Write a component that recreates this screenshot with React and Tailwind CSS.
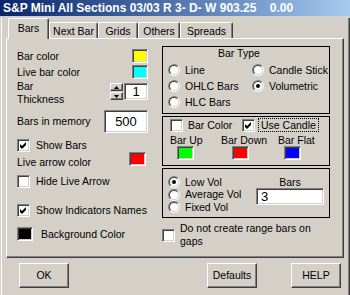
import React from 'react';

const sunken = 'border border-t-[#808080] border-l-[#808080] border-r-white border-b-white shadow-[inset_1px_1px_#404040,inset_-1px_-1px_#d4d0c8]';
const raised = 'border border-t-white border-l-white border-r-[#404040] border-b-[#404040] shadow-[inset_-1px_-1px_#808080]';

const Radio = ({ on }) => (
    <span className="w-[12px] h-[12px] shrink-0 rounded-full border border-t-[#808080] border-l-[#808080] border-r-white border-b-white flex">
        <span className="flex-1 rounded-full border border-t-[#404040] border-l-[#404040] border-r-[#d4d0c8] border-b-[#d4d0c8] bg-white flex items-center justify-center">
            {on && <span className="w-[4px] h-[4px] rounded-full bg-black" />}
        </span>
    </span>
);

const Check = ({ on }) => (
    <span className={`w-[13px] h-[13px] shrink-0 bg-white flex items-center justify-center ${sunken}`}>
        {on && (
            <svg width="9" height="9" viewBox="0 0 9 9">
                <polygon points="1,3 3,5 7,1 7,4 3,8 1,6" fill="#000" />
            </svg>
        )}
    </span>
);

const Swatch = ({ color, w = 'w-[16px]' }) => (
    <span className={`block ${w} h-[14px] shrink-0 ${sunken} ${color}`} />
);

const Arrow = ({ up }) => (
    <svg width="5" height="3" viewBox="0 0 5 3">
        <polygon points={up ? '2.5,0 5,3 0,3' : '0,0 5,0 2.5,3'} fill="#000" />
    </svg>
);

const Tab = ({ label, w }) => (
    <div className={`${w} h-[16px] mb-px border border-b-0 border-t-white border-l-white border-r-[#404040] shadow-[inset_-1px_0_#808080] rounded-t-[2px] flex justify-center pt-[2px]`}>
        {label}
    </div>
);

const Btn = ({ label, className }) => (
    <div className={`w-[50px] h-[25px] ${raised} flex items-center justify-center ${className}`}>{label}</div>
);

export default function App() {
    return (
        <div className="w-[350px] h-[295px] overflow-hidden bg-[#d4d0c8] font-['Liberation_Sans',Arial,sans-serif] text-[10.5px] leading-[13px] text-black">
            <div className="h-[16px] bg-linear-to-r from-[#0a246a] to-[#a6caf0] text-white font-bold text-[12px] leading-[16px] pl-[3px] whitespace-pre">
                {'S&P Mini All Sections 03/03 R 3- D- W 903.25    0.00'}
            </div>

            <div className="h-[279px] pl-px border-r border-b border-[#404040]">
                <div className="h-full border-l border-white border-r border-b border-r-[#808080] border-b-[#808080]">
                    {/* tabs */}
                    <div className="flex items-end ml-[6px] mt-[2px] -mb-px h-[21px]">
                        <div className="relative z-10 w-[41px] h-[21px] bg-[#d4d0c8] border border-b-0 border-t-white border-l-white border-r-[#404040] shadow-[inset_-1px_0_#808080] rounded-t-[2px] flex justify-center pt-[3px]">
                            Bars
                        </div>
                        <Tab label="Next Bar" w="w-[49px]" />
                        <Tab label="Grids" w="w-[40px]" />
                        <Tab label="Others" w="w-[42px]" />
                        <Tab label="Spreads" w="w-[53px]" />
                    </div>

                    {/* panel */}
                    <div className="ml-[4px] w-[338px] h-[220px] border border-t-white border-l-white border-r-[#404040] border-b-[#404040] shadow-[inset_-1px_-1px_#808080] flex">
                        <div className="flex flex-col pl-[10px] w-[141px]">
                            <div className="mt-[10px] h-[14px] flex items-center justify-between">
                                <span>Bar color</span>
                                <Swatch color="bg-[#ffff00]" />
                            </div>
                            <div className="mt-[2px] h-[14px] flex items-center justify-between">
                                <span>Live bar color</span>
                                <Swatch color="bg-[#00ffff]" />
                            </div>
                            <div className="mt-px h-[26px] flex justify-between">
                                <div className="flex flex-col">
                                    <span>Bar</span>
                                    <span>Thickness</span>
                                </div>
                                <div className="mt-[3px] flex gap-px">
                                    <div className="flex flex-col gap-px">
                                        <div className={`w-[13px] h-[8px] ${raised} flex items-center justify-center`}><Arrow up /></div>
                                        <div className={`w-[13px] h-[8px] ${raised} flex items-center justify-center`}><Arrow /></div>
                                    </div>
                                    <div className={`w-[24px] h-[17px] bg-white ${sunken} flex items-center justify-center text-[13px]`}>1</div>
                                </div>
                            </div>
                            <div className="mt-[4px] h-[23px] flex items-center justify-between">
                                <span>Bars in memory</span>
                                <div className={`w-[44px] h-[23px] bg-white ${sunken} flex items-center justify-center text-[13px]`}>500</div>
                            </div>
                            <div className="mt-[6px] h-[13px] flex items-center gap-[6px]">
                                <Check on />
                                <span>Show Bars</span>
                            </div>
                            <div className="h-[17px] flex items-start justify-between">
                                <span className="mt-[4px]">Live arrow color</span>
                                <span className="mr-[2px]"><Swatch color="bg-[#ff0000]" w="w-[17px]" /></span>
                            </div>
                            <div className="mt-[6px] h-[13px] flex items-center gap-[6px]">
                                <Check />
                                <span>Hide Live Arrow</span>
                            </div>
                            <div className="mt-[16px] h-[13px] flex items-center gap-[6px]">
                                <Check on />
                                <span>Show Indicators Names</span>
                            </div>
                            <div className="mt-[10px] h-[14px] flex items-center gap-[8px]">
                                <Swatch color="bg-black" />
                                <span>Background Color</span>
                            </div>
                        </div>

                        <div className="ml-[14px] w-[168px] flex flex-col">
                            {/* Bar Type */}
                            <div className="mt-[7px] h-[68px] border border-black flex flex-col">
                                <div className="pl-[55px] h-[13px]">Bar Type</div>
                                <div className="mt-[2px] h-[16px] flex items-center">
                                    <div className="pl-[5px] w-[89px] flex items-center gap-[5px]"><Radio /><span>Line</span></div>
                                    <div className="flex items-center gap-[5px]"><Radio /><span>Candle Stick</span></div>
                                </div>
                                <div className="h-[16px] flex items-center">
                                    <div className="pl-[5px] w-[89px] flex items-center gap-[5px]"><Radio /><span>OHLC Bars</span></div>
                                    <div className="flex items-center gap-[5px]"><Radio on /><span>Volumetric</span></div>
                                </div>
                                <div className="h-[16px] flex items-center">
                                    <div className="pl-[5px] flex items-center gap-[5px]"><Radio /><span>HLC Bars</span></div>
                                </div>
                            </div>

                            {/* colors */}
                            <div className="mt-[2px] h-[50px] border border-black flex flex-col">
                                <div className="mt-px h-[14px] pl-[7px] flex items-center">
                                    <div className="w-[72px] flex items-center gap-[5px]"><Check /><span>Bar Color</span></div>
                                    <Check on />
                                    <span className="ml-[3px] h-[14px] px-[2px] border border-dotted border-black leading-[12px]">Use Candle</span>
                                </div>
                                <div className="mt-[2px] pl-[7px] flex leading-[12px]">
                                    <div className="w-[51px] flex flex-col">
                                        <span>Bar Up</span>
                                        <span className="ml-[7px]"><Swatch color="bg-[#00ff00]" w="w-[17px]" /></span>
                                    </div>
                                    <div className="w-[57px] flex flex-col">
                                        <span>Bar Down</span>
                                        <span className="ml-[11px]"><Swatch color="bg-[#ff0000]" w="w-[17px]" /></span>
                                    </div>
                                    <div className="flex flex-col">
                                        <span>Bar Flat</span>
                                        <span className="ml-[6px]"><Swatch color="bg-[#0000ff]" w="w-[17px]" /></span>
                                    </div>
                                </div>
                            </div>

                            {/* volume */}
                            <div className="mt-[2px] h-[50px] border border-black flex">
                                <div className="pl-[5px] pt-[7px] w-[93px] flex flex-col">
                                    <div className="h-[12px] flex items-center gap-[5px]"><Radio on /><span>Low Vol</span></div>
                                    <div className="h-[13px] flex items-center gap-[5px]"><Radio /><span>Average Vol</span></div>
                                    <div className="h-[12px] flex items-center gap-[5px]"><Radio /><span>Fixed Vol</span></div>
                                </div>
                                <div className="pt-[7px] w-[68px] flex flex-col">
                                    <div className="h-[12px] leading-[12px] text-center">Bars</div>
                                    <div className={`h-[17px] bg-white ${sunken} pl-[4px] text-[13px] leading-[15px]`}>3</div>
                                </div>
                            </div>

                            <div className="mt-[4px] flex items-center gap-[5px]">
                                <Check />
                                <span>Do not create range bars on<br />gaps</span>
                            </div>
                        </div>
                    </div>

                    {/* buttons */}
                    <div className="mt-[5px] flex">
                        <Btn label="OK" className="ml-[17px]" />
                        <Btn label="Defaults" className="ml-[138px]" />
                        <Btn label="HELP" className="ml-[34px]" />
                    </div>
                </div>
            </div>
        </div>
    );
}
